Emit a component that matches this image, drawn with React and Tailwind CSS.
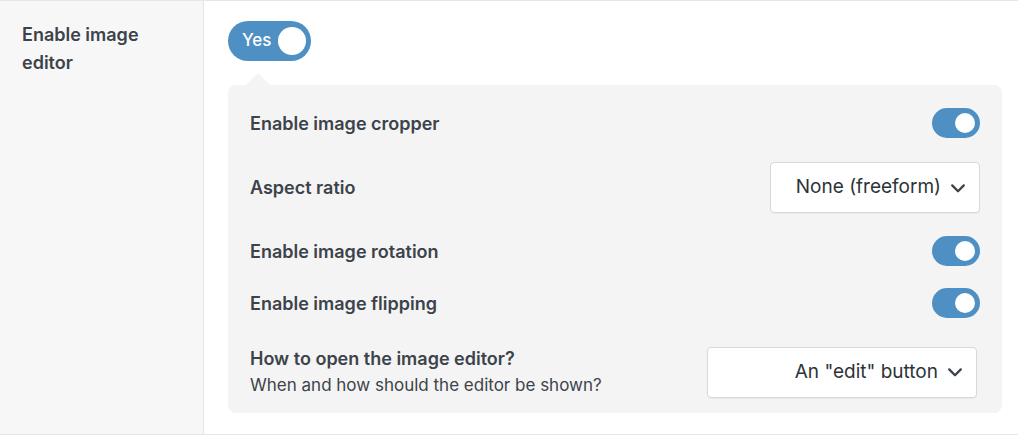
const Toggle = () => (
  <div className="w-[48px] h-[30px] rounded-full bg-[#4e8fc4] flex items-center justify-end pr-[5px]">
    <div className="w-[20px] h-[20px] rounded-full bg-white" />
  </div>
);
const Chevron = () => (
  <svg width="18" height="18" viewBox="0 0 14 14" fill="none" stroke="#3c434a" strokeWidth="1.8" strokeLinecap="round" strokeLinejoin="round"><path d="M2.5 5l4.5 4.5L11.5 5" /></svg>
);
const Select = ({ children, w }) => (
  <div className={`${w} h-[51px] bg-white border border-[#d5d8dc] rounded-[4px] flex items-center justify-end gap-[8px] pr-[12px] text-[19px] font-normal text-[#2c3338] shadow-[0_1px_1px_rgba(0,0,0,0.04)]`}>
    {children}<Chevron />
  </div>
);
export default function App() {
  return (
    <div className="w-[1018px] h-[435px] bg-white flex border-t border-b border-[#e6e6e6] text-[#3c434a]" style={{ fontFamily: "Inter, 'Noto Sans', sans-serif" }}>
      <div className="w-[204px] shrink-0 bg-[#f7f7f7] border-r border-[#e4e4e4] pl-[22px] pt-[20px] text-[18px] font-semibold leading-[28px]">
        Enable image<br />editor
      </div>
      <div className="flex-1 pl-[24px] pr-[16px] pt-[20px]">
        <div className="w-[83px] h-[40px] rounded-full bg-[#4e8fc4] flex items-center justify-between pl-[14px] pr-[5px]">
          <span className="text-white text-[17px] font-medium">Yes</span>
          <div className="w-[28px] h-[28px] rounded-full bg-white" />
        </div>
        <div className="relative mt-[24px] bg-[#f4f4f4] rounded-[8px] pl-[22px] pr-[22px] pt-[23px] pb-[22px] h-[328px]">
          <div className="absolute -top-[12px] left-[18px] w-0 h-0 border-l-[12px] border-r-[12px] border-b-[12px] border-l-transparent border-r-transparent border-b-[#f4f4f4]" />
          <div className="flex flex-col text-[18px] font-semibold">
            <div className="flex items-center justify-between h-[30px]"><span>Enable image cropper</span><Toggle /></div>
            <div className="flex items-center justify-between h-[51px] mt-[24px]"><span>Aspect ratio</span><Select w="w-[210px]">None (freeform)</Select></div>
            <div className="flex items-center justify-between h-[30px] mt-[23px]"><span>Enable image rotation</span><Toggle /></div>
            <div className="flex items-center justify-between h-[30px] mt-[22px]"><span>Enable image flipping</span><Toggle /></div>
            <div className="flex items-center justify-between mt-[27px] pr-[3px]">
              <div className="flex flex-col leading-[27px]">
                <span>How to open the image editor?</span>
                <span className="font-normal text-[17px]">When and how should the editor be shown?</span>
              </div>
              <Select w="w-[270px]">An "edit" button</Select>
            </div>
          </div>
        </div>
      </div>
    </div>
  );
}
